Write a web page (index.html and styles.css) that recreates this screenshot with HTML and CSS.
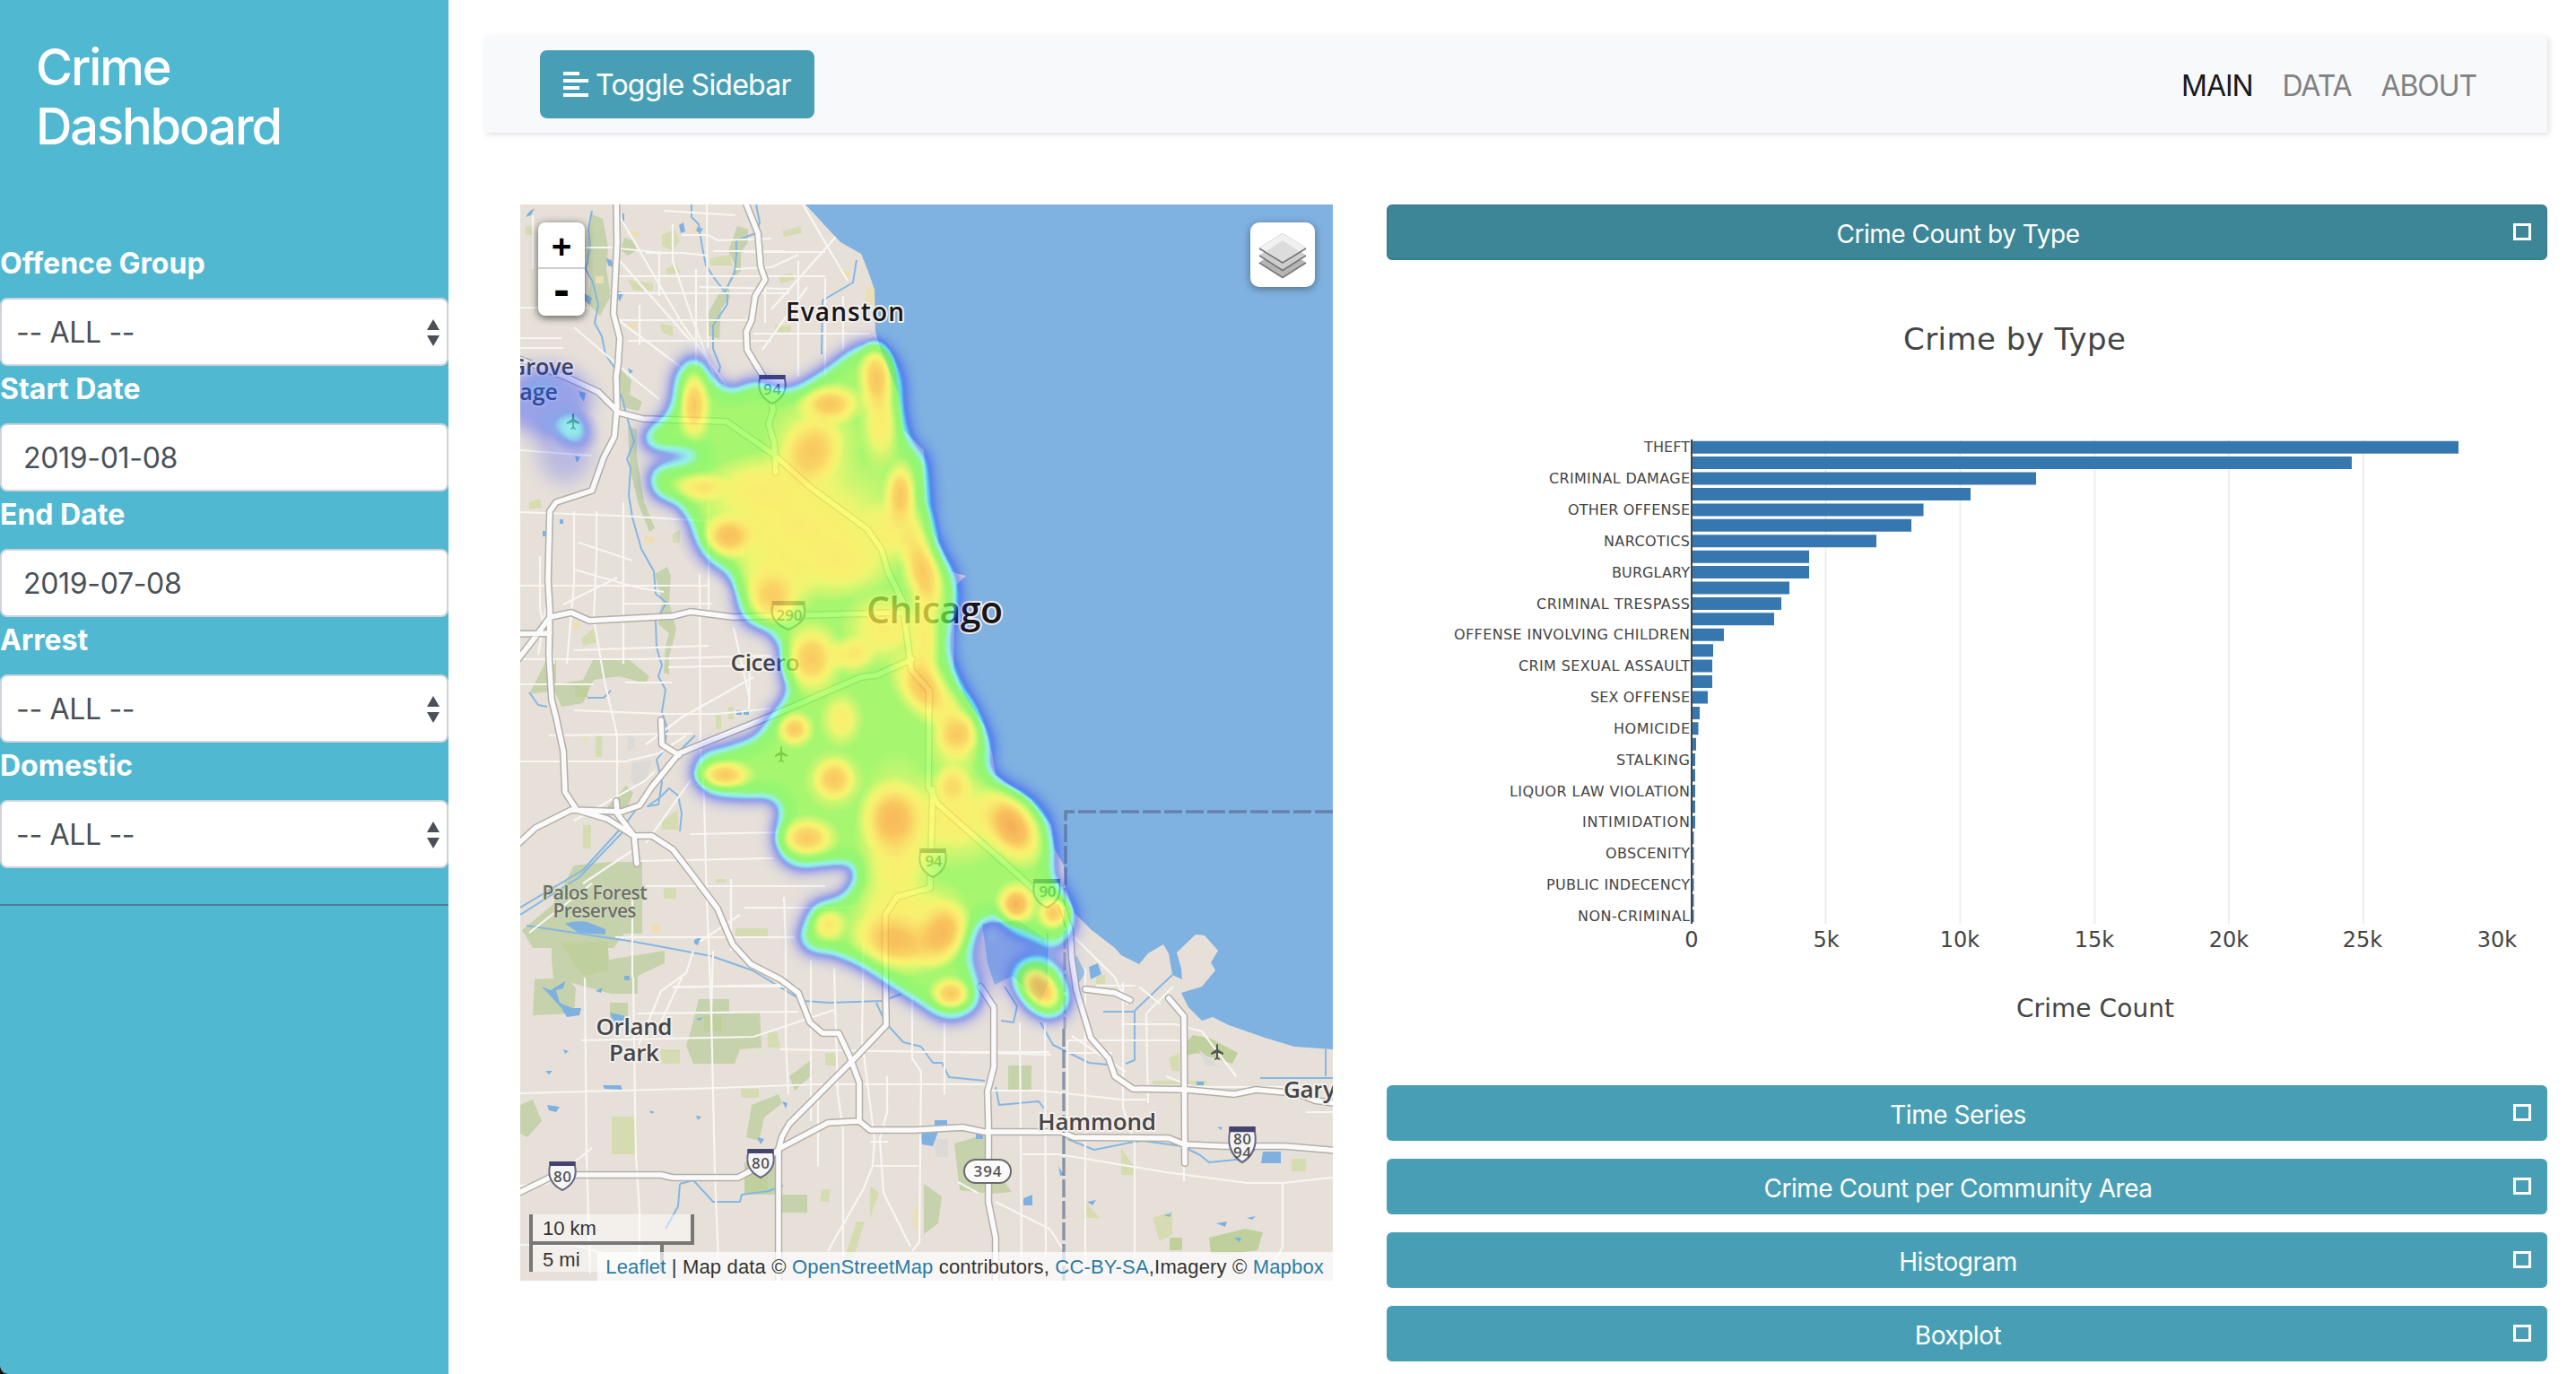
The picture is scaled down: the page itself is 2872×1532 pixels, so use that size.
FILE: index.html
```html
<!DOCTYPE html>
<html lang="en">
<head>
<meta charset="utf-8">
<title>Crime Dashboard</title>
<link rel="stylesheet" href="styles.css">
</head>
<body>
<div class="wrapper">
  <nav class="sidebar">
    <h3 class="brand">Crime<br>Dashboard</h3>
    <form class="filters">
      <label class="field-label">Offence Group</label>
      <div class="control select">-- ALL --<svg class="caret" viewBox="0 0 14 30"><path d="M7 0l7 12H0zM7 30L0 18h14z"/></svg></div>
      <label class="field-label">Start Date</label>
      <div class="control date">2019-01-08</div>
      <label class="field-label">End Date</label>
      <div class="control date">2019-07-08</div>
      <label class="field-label">Arrest</label>
      <div class="control select">-- ALL --<svg class="caret" viewBox="0 0 14 30"><path d="M7 0l7 12H0zM7 30L0 18h14z"/></svg></div>
      <label class="field-label">Domestic</label>
      <div class="control select">-- ALL --<svg class="caret" viewBox="0 0 14 30"><path d="M7 0l7 12H0zM7 30L0 18h14z"/></svg></div>
    </form>
    <hr class="rule">
    <svg class="corner" viewBox="0 0 10 10"><path d="M0 0Q1 9 10 10H0z"/></svg>
  </nav>

  <div class="content">
    <header class="navbar">
      <button class="toggle" type="button">
        <svg class="toggle-icon" viewBox="0 0 28 30"><path d="M0 1h18v4H0zM0 9h28v4H0zM0 17h18v4H0zM0 25h28v4H0z"/></svg>
        <span>Toggle Sidebar</span>
      </button>
      <div class="links"><a class="active">MAIN</a><a>DATA</a><a>ABOUT</a></div>
    </header>

    <main class="row">
      <section class="map">
        <svg class="tiles" viewBox="580 228 906 1200">
          <defs>
            <filter id="soft" x="-20%" y="-20%" width="140%" height="140%"><feGaussianBlur stdDeviation="10"/></filter>
            <filter id="ramp" filterUnits="userSpaceOnUse" x="580" y="228" width="906" height="1200" color-interpolation-filters="sRGB">
              <feColorMatrix values="0 0 0 1 0  0 0 0 1 0  0 0 0 1 0  0 0 0 1 0"/>
              <feComponentTransfer>
                <feFuncR type="table" tableValues=".1 .1 .1 .1 .1 .12 .25 .35 .4 .42 .44 .46 .5 .65 .8 .95 1 1 1 .99 .97"/>
                <feFuncG type="table" tableValues=".2 .2 .2 .2 .24 .4 .85 1 1 1 1 1 1 1 1 .99 .96 .88 .78 .68 .58"/>
                <feFuncB type="table" tableValues="1 1 1 1 1 1 1 .95 .6 .33 .28 .28 .28 .28 .28 .28 .28 .26 .22 .18 .13"/>
                <feFuncA type="table" tableValues="0 .08 .17 .27 .38 .47 .52 .58 .64 .68 .7 .72 .72 .72 .72 .73 .73 .73 .74 .74 .75"/>
              </feComponentTransfer>
            </filter>
            <radialGradient id="g"><stop offset="0" stop-color="#000" stop-opacity="1"/><stop offset=".35" stop-color="#000" stop-opacity=".84"/><stop offset=".7" stop-color="#000" stop-opacity=".33"/><stop offset="1" stop-color="#000" stop-opacity="0"/></radialGradient>
            <g id="shield"><path d="M-14-15h28v4q4 18-14 27Q-18 7-14-11z" fill="#f7f6f7" stroke="#6a6984" stroke-width="2"/><path d="M-14-16h28v5h-28z" fill="#45446c"/></g>
            <path id="plane" d="M-1-8q1-2 2 0v5l6 4v2l-6-2v5l2 2v1l-3-1-3 1v-1l2-2v-5l-6 2v-2l6-4z" fill="#555"/>
            <path id="roads" stroke-linejoin="round" stroke-linecap="round" d="M687 220l1 50-4 80 7 27-2 30-2 13 1 33-3 34-12 23-13 37-40 13-7 10-2 77 2 33-1 50 3 50 5 20 8 37 2 46 13 20 34 10 30 19h20l23 15 20 26 30 40 10 24 7 16 20 22 33 17 20 15 13 33 14 12h18l12 25 11 30v43l12 10h50l53-3 24 5h86l14 6 106 1 17 7 43 2 70 0 60 5M829 220l16 40 3 37 5 15-11 18-4 27-6 13 1 20 24 40 5 27-5 16 6 20 2 34M570 397l60 23 37 17 23 23 27 7 93 3 53 37 40 36 64 47 16 23 7 24 16 33 10 77 20 23-1 107 11 20 110 97 27 13 10 30 2 33 5 34 16 53 20 23 7 20 20 14 60 1 53 5 24-5 46 4 20 8 30 4M570 745l27-35 16-22 24-5 20 9 93-5 20-5 47 6 190-5M570 707l43-1M570 948l27-25 40-20 56 2 20-7 14-21 30-37 106-43 97-42 17-2 40-18M737 803l1 27 19 12M687 893l1 14 19 25 3 31M1040 880l-3 110-37 10-13 20v53l1 70-38 40-70 70-8 14-4 14 0 160M570 1334l43-21 24-3h100l13 3h73l24-13 23-20 53-28 35-2M1093 1100l15 23v67l-7 27 1 33v90l8 40v60M1210 1103l33 4 17 8M1303 1113l17 20 1 164"/>
          </defs>
          <path fill="#e7e0d9" d="M580 228h906v1200H580z"/>

          <g fill="#c5d2ab">
            <path d="M658 238l14 6 6 32-2 24 5 30-12 22-14-14 4-30-6-22zM822 252l12 4v14l-8 12v20l-14 14 2 16-10 12-2 34-12-4-2-22 12-22 12-14 8-20-8-16zM696 265l12 4 2 10-10 6-8-6zM690 410l14 14-2 16 14 8-4 10-18-4zM700 475l10 4v30l8 50 12 30-6 4-12-30-10-42zM730 640l14-8 4 10-2 30 8 30-8 30v20l-6-2 2-30 4-14-12-10 4-26zM640 965l40-4 36 0v80h-20l-12 16h-90l-12-20 34-28zM615 1048h62l2 22 62-10v14l-30 14v20h-30l-64-18-2-20zM596 1092l36-2 10 12-2 28-46 2zM680 1118h20v18h-20zM779 1114h34v14h34l2 40-24 2-6 16h-46l-8-20 6-20zM838 1232l30-12 4 10-20 16-6 26-14-4zM830 1296h40v36h-40zM870 1332h30v20h-30zM1124 1188h26v28h-26zM1064 1275l34-10v50h20l10 14-22 2-36-4zM1030 1320l20 14-4 30-16 12zM580 1232l14-6 10 24-16 18-8-4zM880 1200l24-18 2 16-20 18zM610 735l10 0v28l30-5 12-24 40 2 22 18-4 8-30-8-28 4-12 26-24 4-8-18-28 4zM668 910l30-34 8 8-10 24z"/>
          </g>
          <g fill="#d5dcb1">
            <path d="M738 262l14-6 6 12-8 12-12-6zM792 288l22-4 2 12-24 0zM742 300l12-6 4 10-14 2zM868 308l14-4 4 8-16 4zM872 258l20-6 2 8-20 4zM736 360l14 4v12l-12-6zM864 362l18 2v6h-18zM700 312l28 4v8h-22zM590 560l12-4 2 10-14 2zM648 712l14-12 4 16-16 4zM664 820h7v24h-7zM798 795h6v18h-6zM812 788h6v14h-6zM738 915l18-12v22h-18zM650 920h9v26h-9zM798 980h12v4h-12zM740 990h14v12h-14zM820 1035h36v10h-36zM736 1170l22 0v16h-20zM856 1152l10-2 4 18h-14zM920 1174h12v14h-12zM826 1214h20v10h-20zM682 1245h28v42h-28zM924 1340h-10l2-14h10zM970 1322l10 8-10 28zM955 1362l9 0-12 40-12 4zM1250 1280l14 20v10h-14zM1210 1340l16 18-18 0zM1440 1292h16v14h-16zM1285 1358l22-8v26l-14 8zM1285 1205h60v4h-60zM1303 1180l12-6v20h-8zM1222 1087h10v10h-10zM586 252h8v10h-8zM750 595l8-4v14h-8z"/>
          </g>
          <g fill="#bfd09d"><path d="M1348 1380l40-10 20 4-6 20-30 4h-22zM1304 1380h14v14h-14zM1330 1154l20 4 30 16-6 12-40-12-14 4-4-8zM624 1050h54v32l-26 6-8-8zM785 1132h20v18h-20zM641 765h14v12h-14zM830 1300h26v30h-26z"/></g>
          <g fill="#ecdfb8"><path d="M703 258h10v6h-10zM772 252h6v8h-6zM966 322l10-6v18l-6 8-6-8zM664 308h9v8h-9zM699 360h12v6h-12zM638 695l8-4v10l-6 2zM726 1030h10v10h-10zM720 596l12 4-4 6h-10zM648 820l8 3-4 6zM1018 1346h6v24h-6zM940 302h7v8h-7z"/></g>
          <path fill="#dcdad6" d="M700 820l8 4v10l-8 4zM705 850l22-2-6 20-12 10-6-10zM1336 1170l26 20-18-2zM1043 1270h14v20h-14z"/>

          <g fill="#7fb1e0">
            <path d="M757 251l5-3 2 10-5 2zM778 253l6 2-4 5-4-3zM676 288l6 2 2 8-6-2zM650 326l10 6-2 8-8-6zM690 324l5 4-4 8-4-6zM700 410l6 4-4 3zM645 436l8 2-2 10-4-6zM641 508l6 2-4 6zM624 579h4v5h-4zM605 592h6v6h-6zM821 792h6v5h-6zM829 792h6v5h-6zM630 1030q10-4 25-2l20 8v6l-30-2zM774 1048l8-4-4 10-4-2zM604 1100l10 4 16-10-2 8-8 2 4 14 14 6 10 0-2 8-14 2-6-10zM664 1105l8-4-2 6zM680 1129l18 4-2 8-12-2zM696 1088h6v5h-6zM776 1136l8-2-4 4zM628 1170l6 2-4 3zM608 1194l8 0-4 4zM672 1210l20 0 2 5-20-1zM610 1232l14 2-4 6-8-2zM724 1238l6 2-4 2zM776 1244l6 1-4 4zM844 1268l8 2-4 6zM872 1228l6 2-2 6zM1026 1258l12 0 8 4-6 16-12-2zM1042 1249h14v6h-14zM1088 1264h8v6h-8zM1214 1078l10-4 4 12-12 6zM1408 1284h20v13h-22zM1334 1206h8v4h-8zM1336 1214h6v4h-6zM1141 1336l10-4v12h-10zM1212 1340l10-2-4 6zM1356 1364l12-2-2 6zM1376 1380l8 0-2 5zM1390 1358l10-2-4 4zM1298 1355l8-2-2 4zM1357 1256l6 1-2 3zM1180 1300l6 10-4 1zM590 236l6-4-4 8-6 2zM694 238l2 0v10h-2z"/>
            <path d="M1095 1030l40-4 30 20 4 50-10 22-30-30-20 10-8-24zM1200 1065l10 20-8 12-6-20z" fill-opacity=".7"/>
          </g>
          <g fill="none" stroke="#85b7e2" stroke-width="2" stroke-linejoin="round">
            <path d="M660 235l-4 20 2 20-5 25 8 15 6 25-4 20 8 15 4 20 10 15 2 20 6 12 8 30 6 20-8 20 4 10-2 30 4 25 10 35 14 25 2 25 12 10-12 20 1 30 6 20-4 12 8 15-4 25 6 18-4 25-8 10 6 25-4 25-12 2 14-10 10-10 10 8 4 20-2 20"/>
            <path d="M771 228v14l8 8 4 26 4 20 10 15 14 18 0 10-16 24v26l8 20-3 10M843 228l4 20-4 12-22 8 0 16-2 20-10 20"/>
            <path d="M955 290l-4 25-34 20-1 60M580 1012l70-42 50-55 55-75 20-20M580 1020l66-42 48-50M587 1032l120 18 86 16 46 16 56 34 30 2 60-2 20-8"/>
            <path d="M977 1118l10 22 20 22 20 5 13 18h10l8 16 40 4M758 1320l15-4 22 24h30l2-8 30-4 16-6M758 1320l-2 25-14 25M1160 1140l14 25 40 20 20 2M1110 1212l4 20 44-4 6 8M1190 1270l30 12 20-4 20-4 14-2 44 6 20 10 10 8 40-4 15-14M590 772l10 14 10 2M655 778h18l8-8M1265 1127v55l-10 4M1265 1127l42-40M1230 1128h34M1478 1170v30M1405 1202h81"/>
            <path d="M1168 1040l-2 60M1120 1100l14 22-4 18-14-2"/>
          </g>

          <g fill="none" stroke="#f8f6f3" stroke-width="2.2">
            <path d="M580 388h48M580 377h46M580 343h76M580 571l110 4 100 6M690 308h230M680 327h200M690 357h150M700 380h160M840 372h130M580 502l80 6M580 653h210M628 674l60-30M694 673h100M640 725l150-5M580 735l130 0 150-4M580 763h82M745 744l90-2M697 761h52M640 792l100 4h60l60-6M612 820l160-2M580 849h120M700 848l35-8 30-20M770 930l100-2M712 960l150-3M720 988h200M830 1012h120M686 1045h200M750 1100h140M710 1130l180-2M750 1101l120-3M648 1160l192-4 90-30M580 1219l220-6 110-4h190M870 1170l230 4 72 2M1030 1173l140 0M970 1273h20M975 1300h48M1100 1216l60 0 90 10h28M1140 1287h40l120 20 90 12h40l56-6M1190 1174h50M1250 1142l60 0 30 8M1190 1160h128M1195 1155l60 40M1222 1099h44M1300 1200l30 12h150M760 262h30l10 6 60-2M795 280h80M830 281h90M740 235l80 5M720 282h40l30 3M780 320l100 2M820 300l40-2 30-14M650 276l30 0 60 6"/>
            <path d="M594 240v60M602 620v60l16 60M640 570v80l-8 90M665 570v50l-3 70 12 70 14 60v70M695 560v180M713 340v45M735 280v50M750 250v40l20 60 30 80M788 228l1 160M776 300v110M780 640l1 200 4 50 2 80 2 58 4 100 4 180 4 100M818 700l18 80M836 740l-1 50M790 560v120M853 300v60M890 290v130M920 310v110M940 330v60M1430 1320v70l-10 20M1486 1240l-30 0M874 1000l2 50v110l3 60M904 1070v180M930 1080l4 140 6 40v140M963 1050l-2 110 14 110-2 30-10 25-40 70M989 1200v40l-8 30 4 60 30 60M1017 1110v70l10 15-2 190-8 10M1053 1140v80M1137 1140l2 280M1165 1140l1 260M1190 1160v110M1210 1080v60l0 280M1252 1095v140l13 40v140M1278 1130l2 100M652 1090l2 200 4 130M706 1090l2 140 1 60 4 60v70M815 980v80M705 1000v90M795 1060l-2 70M912 1220v80M690 240l70 120 50 70M690 290l80 90M680 350l80 60M640 365l70 60 25 20M895 228l50 85M860 345l80-90M850 390l50-70M1183 1030l60 60 14 30M1270 1100l24 20M1110 1340l60 30 20 30M1090 1330l-22-12M760 1090l-28 60M773 1060l-8 25-28 20-25 60M825 1020l-45 30M640 915l80-45 10-10M650 985l60-40M720 830l40-30 80-45M720 940l50-70M590 1040l70-55M640 635l70 20 30 5M645 605l60 20M1340 1150l38 50M1278 1130l30-30M580 1322l30-2 50-40M580 1388h60l50 15M1320 1297v20M600 730l10-60"/>
          </g>

          <use href="#roads" fill="none" stroke="#b3aea8" stroke-width="8.5"/>
          <use href="#roads" fill="none" stroke="#fbfafa" stroke-width="5.5"/>

          <path fill="#80b2e1" d="M898 228L937 270 960 283 967 300 975 323 976 370 982 390 1002 440 1008 480 1030 502 1034 560 1042 596 1062 638 1077 642 1066 652 1064 700 1063 745 1075 775 1098 810 1106 840 1110 864 1150 892 1172 920 1175 945 1186 965 1188 990 1198 1018 1217 1037 1243 1057 1250 1065 1270 1075 1280 1063 1297 1053 1303 1063 1307 1087 1318 1092 1317 1080 1312 1062 1333 1042 1343 1043 1358 1060 1350 1073 1355 1082 1340 1100 1317 1107 1325 1123 1340 1138 1352 1134 1370 1143 1410 1157 1443 1167 1486 1170V228z"/>
          <path d="M1486 905h-298v85M1186 1147v281" fill="none" stroke="#56698f" stroke-opacity=".65" stroke-width="3.4" stroke-dasharray="20 4"/>
          <path d="M1187 990v157" fill="none" stroke="#56698f" stroke-opacity=".4" stroke-width="3" stroke-dasharray="20 4"/>

          <g class="shields">
            <use href="#shield" x="861" y="434"/><text x="861" y="440" textLength="20">94</text>
            <g transform="translate(879 686) scale(1.25 1)"><use href="#shield"/></g><text x="880" y="692" textLength="29">290</text>
            <use href="#shield" x="1040" y="962"/><text x="1041" y="966" textLength="19">94</text>
            <use href="#shield" x="1167" y="996"/><text x="1168" y="1000" textLength="19">90</text>
            <use href="#shield" x="627" y="1311"/><text x="627" y="1318" textLength="20">80</text>
            <use href="#shield" x="848" y="1297"/><text x="848" y="1303" textLength="20">80</text>
            <g transform="translate(1385 1276) scale(1 1.25)"><use href="#shield"/></g><text x="1385" y="1276" textLength="20">80</text><text x="1385" y="1291" textLength="20">94</text>
            <rect x="1075" y="1293" width="52" height="26" rx="13" fill="#fbfafa" stroke="#6b6b6b" stroke-width="2"/><text x="1101" y="1312" textLength="31">394</text>
          </g>
          <use href="#plane" x="639" y="470"/><use href="#plane" x="871" y="841"/><use href="#plane" x="1357" y="1173"/>

          <g class="places">
            <text class="dark" x="942" y="358" font-size="28" textLength="132">Evanston</text>
            <text class="dark" x="1042" y="695" font-size="41" textLength="152">Chicago</text>
            <text x="853" y="748" font-size="26" textLength="77">Cicero</text>
            <text class="end" x="640" y="418" font-size="25">Grove</text>
            <text class="end" x="622" y="446" font-size="25">Village</text>
            <text class="park" x="663" y="1003" font-size="21" textLength="117">Palos Forest</text>
            <text class="park" x="663" y="1023" font-size="21" textLength="93">Preserves</text>
            <text x="707" y="1154" font-size="26" textLength="85">Orland</text>
            <text x="707" y="1183" font-size="26" textLength="56">Park</text>
            <text x="1223" y="1260" font-size="26" textLength="132">Hammond</text>
            <text x="1460" y="1224" font-size="26" textLength="58">Gary</text>
          </g>

          <g filter="url(#ramp)">
            <g filter="url(#soft)">
              <path fill-opacity=".62" d="M770 397L753 418 751 447 741 468 722 478 716 493 724 500 770 502 790 508 770 515 730 520 724 530 729 552 757 562 772 579 779 603 792 624 816 636 822 660 827 688 840 698 860 703 871 720 874 753 881 773 862 795 845 822 808 835 785 839 774 853 775 871 792 886 830 889 863 888 873 900 865 927 868 953 888 968 920 964 953 961 956 975 942 1000 906 1008 896 1033 890 1047 902 1061 930 1063 963 1078 997 1101 1030 1121 1040 1130 1060 1137 1084 1129 1094 1113 1088 1093 1078 1070 1084 1047 1093 1027 1107 1020 1133 1036 1157 1044 1173 1054 1194 1042 1199 1020 1186 993 1173 978 1175 947 1168 913 1148 889 1117 873 1101 858 1104 827 1091 797 1068 757 1058 730 1059 700 1068 670 1064 640 1051 618 1038 587 1034 537 1032 510 1014 493 1006 460 1004 420 994 397 977 381 953 388 923 411 890 432 870 436 843 424 813 438 793 422 783 401z"/>
              <ellipse cx="1162" cy="1103" rx="25" ry="35" transform="rotate(-38 1162 1103)" fill-opacity=".7"/>
              <ellipse cx="1140" cy="1068" rx="56" ry="38" fill-opacity=".13"/>
              <ellipse cx="608" cy="446" rx="52" ry="40" fill-opacity=".2"/>
              <ellipse cx="630" cy="500" rx="32" ry="40" fill-opacity=".12"/>
            </g>
            <g fill="url(#g)">
              <ellipse cx="643" cy="482" rx="28" ry="26" opacity=".2"/>
              <ellipse cx="604" cy="432" rx="26" ry="20" opacity=".07"/>
              <g opacity=".5">
                <ellipse cx="890" cy="585" rx="140" ry="90"/><ellipse cx="850" cy="545" rx="70" ry="40"/>
                <ellipse cx="905" cy="500" rx="56" ry="64" transform="rotate(25 905 500)"/>
                <ellipse cx="865" cy="650" rx="50" ry="50"/><ellipse cx="935" cy="625" rx="70" ry="46"/>
                <ellipse cx="985" cy="700" rx="50" ry="46"/><ellipse cx="982" cy="470" rx="26" ry="60"/>
                <ellipse cx="1030" cy="715" rx="22" ry="70"/><ellipse cx="1000" cy="590" rx="50" ry="40"/>
                <ellipse cx="1000" cy="945" rx="50" ry="110"/><ellipse cx="1065" cy="910" rx="70" ry="60"/>
                <ellipse cx="930" cy="870" rx="36" ry="36"/>
                <ellipse cx="1000" cy="1025" rx="60" ry="50"/><ellipse cx="1045" cy="1030" rx="40" ry="50"/>
                <ellipse cx="1065" cy="820" rx="34" ry="54"/>
                <ellipse cx="938" cy="802" rx="26" ry="34"/>
              </g>
              <g opacity=".78">
                <ellipse cx="774" cy="452" rx="21" ry="48"/><ellipse cx="977" cy="420" rx="24" ry="46"/>
                <ellipse cx="926" cy="450" rx="42" ry="26"/><ellipse cx="1004" cy="550" rx="21" ry="42"/>
                <ellipse cx="812" cy="598" rx="34" ry="28"/><ellipse cx="905" cy="734" rx="38" ry="46"/>
                <ellipse cx="1029" cy="638" rx="26" ry="60" transform="rotate(-16 1029 638)"/>
                <ellipse cx="1030" cy="768" rx="32" ry="54" transform="rotate(-38 1030 768)"/>
                <ellipse cx="808" cy="864" rx="36" ry="20"/><ellipse cx="900" cy="934" rx="38" ry="27"/>
                <ellipse cx="995" cy="912" rx="42" ry="48"/><ellipse cx="886" cy="813" rx="24" ry="23"/>
                <ellipse cx="1000" cy="1052" rx="60" ry="36" transform="rotate(14 1000 1052)"/>
                <ellipse cx="1050" cy="1042" rx="32" ry="44" transform="rotate(30 1050 1042)"/>
                <ellipse cx="1060" cy="1108" rx="27" ry="22"/><ellipse cx="1175" cy="1018" rx="22" ry="22"/>
                <ellipse cx="1160" cy="1102" rx="21" ry="32" transform="rotate(-40 1160 1102)"/>
              </g>
              <g opacity=".55">
                <ellipse cx="780" cy="543" rx="36" ry="20"/><ellipse cx="860" cy="668" rx="32" ry="34"/>
                <ellipse cx="930" cy="868" rx="26" ry="26"/><ellipse cx="1068" cy="818" rx="28" ry="26"/>
                <ellipse cx="1062" cy="874" rx="24" ry="24"/><ellipse cx="924" cy="1031" rx="24" ry="24"/>
                <ellipse cx="905" cy="505" rx="36" ry="46" transform="rotate(25 905 505)"/><ellipse cx="950" cy="730" rx="30" ry="24"/>
              </g>
              <ellipse cx="1128" cy="922" rx="36" ry="54" transform="rotate(-32 1128 922)" opacity=".95"/>
              <ellipse cx="1133" cy="1008" rx="26" ry="28" opacity=".92"/>
            </g>
          </g>
        </svg>

        <div class="overlay zoom"><span>+</span><span class="minus">-</span></div>
        <div class="overlay layers">
          <svg viewBox="0 0 72 72" stroke-width="1.6">
            <path d="M36 28L62 44.500 36 61 10 44.500z" fill="#b5b5b5"/><path d="M10 45l26 16.500L62 45" fill="none" stroke="#777"/>
            <path d="M36 20L62 36.500 36 53 10 36.500z" fill="#cdcdcd"/><path d="M10 37l26 16.500L62 37" fill="none" stroke="#777"/>
            <path d="M36 12L62 28.500 36 45 10 28.500z" fill="#f1f1f1" stroke="#d5d5d5" stroke-width=".8"/><path d="M36 20l18 12-18 13-18-13z" fill="#dcdcdc"/><path d="M10 29l26 16L62 29" fill="none" stroke="#777"/>
          </svg>
        </div>
        <div class="overlay scale"><div class="km">10 km</div><div class="mi">5 mi</div></div>
        <div class="overlay credit"><a>Leaflet</a> | Map data © <a>OpenStreetMap</a> contributors, <a>CC-BY-SA</a>,Imagery © <a>Mapbox</a></div>
      </section>

      <section class="panels">
        <button class="panel open" type="button">Crime Count by Type<i class="box"></i></button>
        <svg class="chart" viewBox="1546 290 1294 920">
          <path d="M2035.500 490v540M2185.500 490v540M2335.500 490v540M2485 490v540M2635 490v540" stroke="#eee" stroke-width="2" fill="none"/>
          <path fill="#3777b0" d="M1886 491.700h855v14h-855zM1886 509.100h736v14h-736zM1886 526.600h384v14h-384zM1886 544h311v14h-311zM1886 561.400h258.500v14h-258.500zM1886 578.800h245v14h-245zM1886 596.200h206v14h-206zM1886 613.700h131v14h-131zM1886 631.100h131v14h-131zM1886 648.500h109v14h-109zM1886 665.900h100v14h-100zM1886 683.300h92v14h-92zM1886 700.800h36v14h-36zM1886 718.200h24v14h-24zM1886 735.600h23v14h-23zM1886 753h23v14h-23zM1886 770.400h18v14h-18zM1886 787.900h9v14h-9zM1886 805.300h7.500v14h-7.500zM1886 822.700h5v14h-5zM1886 840.100h4v14h-4zM1886 857.500h4v14h-4zM1886 875h4v14h-4zM1886 892.400h4v14h-4zM1886 909.800h4v14h-4zM1886 927.200h2.500v14h-2.500zM1886 944.600h2.500v14h-2.500zM1886 962.100h2.500v14h-2.500zM1886 979.500h2.500v14h-2.500zM1886 996.900h2.500v14h-2.500zM1886 1014.300h2.500v14h-2.500z"/>
          <path d="M1886 490v540" stroke="#444" stroke-width="2"/>
          <text class="heading" x="2246" y="390" textLength="248">Crime by Type</text>
          <g class="cats">
            <text x="1884" y="504" textLength="51">THEFT</text>
            <text x="1884" y="539" textLength="157">CRIMINAL DAMAGE</text>
            <text x="1884" y="574" textLength="136">OTHER OFFENSE</text>
            <text x="1884" y="609" textLength="96">NARCOTICS</text>
            <text x="1884" y="644" textLength="87">BURGLARY</text>
            <text x="1884" y="679" textLength="171">CRIMINAL TRESPASS</text>
            <text x="1884" y="713" textLength="263">OFFENSE INVOLVING CHILDREN</text>
            <text x="1884" y="748" textLength="191">CRIM SEXUAL ASSAULT</text>
            <text x="1884" y="783" textLength="111">SEX OFFENSE</text>
            <text x="1884" y="818" textLength="85">HOMICIDE</text>
            <text x="1884" y="853" textLength="82">STALKING</text>
            <text x="1884" y="888" textLength="201">LIQUOR LAW VIOLATION</text>
            <text x="1884" y="922" textLength="120">INTIMIDATION</text>
            <text x="1884" y="957" textLength="94">OBSCENITY</text>
            <text x="1884" y="992" textLength="160">PUBLIC INDECENCY</text>
            <text x="1884" y="1027" textLength="125">NON-CRIMINAL</text>
          </g>
          <g class="ticks">
            <text x="1886" y="1056">0</text><text x="2036" y="1056">5k</text><text x="2185" y="1056">10k</text><text x="2335" y="1056">15k</text><text x="2485" y="1056">20k</text><text x="2634" y="1056">25k</text><text x="2784" y="1056">30k</text>
          </g>
          <text class="axis" x="2336" y="1134" textLength="176">Crime Count</text>
        </svg>
        <button class="panel" type="button">Time Series<i class="box"></i></button>
        <button class="panel" type="button">Crime Count per Community Area<i class="box"></i></button>
        <button class="panel" type="button">Histogram<i class="box"></i></button>
        <button class="panel" type="button">Boxplot<i class="box"></i></button>
      </section>
    </main>
  </div>
</div>
</body>
</html>
```
FILE: styles.css
```css
* { box-sizing: border-box; }
body { margin: 0; background: #fff; font-family: Inter, "Liberation Sans", sans-serif; font-size: 32px; line-height: 1.5; color: #212529; overflow: hidden; }
button { font-family: inherit; border: 0; padding: 0; }
.wrapper { display: flex; height: 1532px; }

.sidebar { position: relative; width: 500px; flex: none; background: #51b8d1; color: #fff; }
.brand { margin: 0; padding: 42px 40px 94px; font-size: 56px; font-weight: 500; line-height: 66px; letter-spacing: -0.038em; }
.filters { display: flex; flex-direction: column; }
.field-label { height: 48px; margin-bottom: 16px; padding-top: 2px; font-weight: 700; letter-spacing: 0; }
.control { display: flex; align-items: center; height: 76px; padding-top: 2px; border: 2px solid #ced4da; border-radius: 8px; background: #fff; color: #495057; letter-spacing: -0.01em; }
.select { justify-content: space-between; padding-left: 16px; padding-right: 8px; }
.date { padding-left: 24px; }
.caret { width: 14px; height: 30px; fill: #495057; }
.rule { margin: 40px 0 0; border: 0; height: 2px; background: #4c7d93; }
.corner { position: absolute; left: 0; bottom: 0; width: 9px; height: 9px; fill: #1c0f0c; }

.content { flex: 1; padding: 40px 32px 0 40px; }
.navbar { display: flex; align-items: center; justify-content: space-between; height: 108px; padding: 0 79px 0 62px; background: #f8f9fb; box-shadow: 2px 2px 6px rgba(0, 0, 0, .12); }
.toggle { display: flex; align-items: center; gap: 8px; width: 306px; height: 76px; padding-left: 26px; border-radius: 8px; background: #489fb5; color: #fff; font-size: 32px; letter-spacing: -0.024em; }
.toggle-icon { width: 28px; height: 30px; fill: #fff; }
.links { display: flex; gap: 33px; padding-top: 3px; color: #808182; letter-spacing: -0.034em; }
.active { color: #1a1a1b; }

.row { display: flex; gap: 60px; padding: 80px 0 0 40px; }
.map { position: relative; width: 906px; height: 1200px; flex: none; overflow: hidden; font-family: "Liberation Sans", Arial, sans-serif; }
.tiles { display: block; width: 906px; height: 1200px; }
.places { font-family: "Open Sans", "Noto Sans", sans-serif; font-weight: 600; text-anchor: middle; fill: #454547; stroke: #f3efeb; stroke-width: 4px; stroke-linejoin: round; paint-order: stroke; }
.dark { fill: #16161a; }
.end { text-anchor: end; }
.park { fill: #6d7166; stroke: #d5dcc6; stroke-width: 2px; }
.shields { font-family: "Open Sans", "Noto Sans", sans-serif; font-size: 17px; font-weight: 600; text-anchor: middle; fill: #555; }

.overlay { position: absolute; }
.zoom { left: 20px; top: 20px; width: 52px; height: 104px; border-radius: 8px; background: #fff; box-shadow: 0 2px 10px rgba(0, 0, 0, .65); font: bold 36px/54px "DejaVu Sans Mono", monospace; text-align: center; color: #000; padding-left: 2px; }
.zoom span { display: block; height: 52px; margin-left: -2px; border-bottom: 2px solid #ccc; }
.zoom .minus { border: 0; font-size: 44px; line-height: 50px; }
.layers { right: 20px; top: 20px; width: 72px; height: 72px; border-radius: 10px; background: #fff; box-shadow: 0 2px 10px rgba(0, 0, 0, .4); }
.layers svg { display: block; }
.scale { left: 10px; bottom: 10px; font-size: 22px; line-height: 32px; color: #333; }
.km { width: 184px; height: 34px; padding-left: 11px; border: 4px solid #777; border-top: 0; background: rgba(255, 255, 255, .5); }
.mi { width: 150px; height: 30px; padding: 1px 0 0 11px; border: solid #777; border-width: 0 4px; background: rgba(255, 255, 255, .5); }
.credit { right: 0; bottom: 0; width: 820px; height: 32px; padding-right: 10px; background: rgba(255, 255, 255, .7); font-size: 22px; line-height: 33px; letter-spacing: .17px; text-align: right; white-space: nowrap; color: #333; }
.credit a { color: #2a7ba5; }

.panels { display: flex; flex-direction: column; flex: 1; }
.panel { position: relative; height: 62px; margin-bottom: 20px; border-radius: 6px; background: #489fb5; color: #fff; font-size: 28px; line-height: 62px; letter-spacing: -0.017em; padding: 2px 20px 0 0; }
.open { margin-bottom: 0; background: #3d8698; border: 2px solid #397d8f; line-height: 58px; }
.box { position: absolute; right: 18px; top: 21px; width: 20px; height: 19px; border: 3px solid #fff; }
.open .box { right: 16px; top: 19px; }
.chart { display: block; width: 1294px; height: 920px; font-family: "DejaVu Sans", sans-serif; fill: #444; }
.chart text { text-anchor: middle; }
.heading { font-size: 34px; }
.chart .cats text { font-size: 16px; text-anchor: end; }
.ticks { font-size: 24px; }
.axis { font-size: 28px; }
```
